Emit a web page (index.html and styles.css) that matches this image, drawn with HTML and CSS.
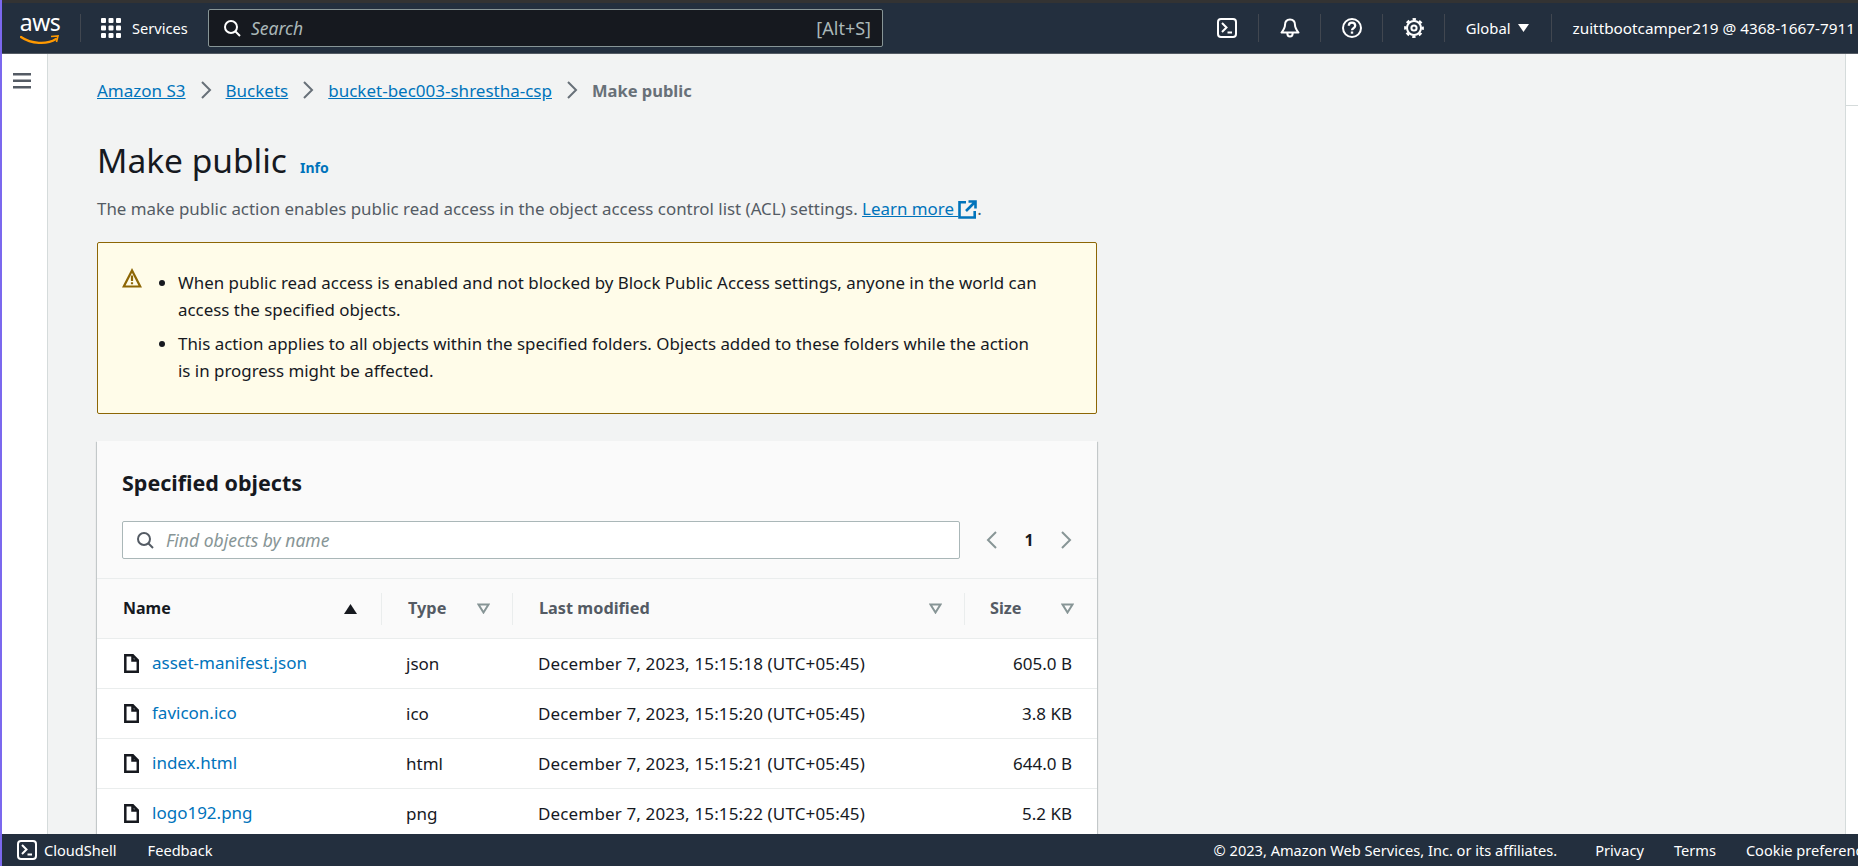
FILE: index.html
```html
<!DOCTYPE html>
<html lang="en">
<head>
    <meta charset="UTF-8">
    <title>Make public</title>
    <link rel="stylesheet" href="styles.css">
</head>
<body>
    <div class="app">
        <div class="top-strip"></div>
        <header class="topnav">
            <div class="aws-logo">
                <span class="aws-word">aws</span>
                <svg class="aws-smile" width="40" height="10" viewBox="0 0 40 10"><path d="M1 2c10 7 26 8 35 2" fill="none" stroke="#f90" stroke-width="2.2" stroke-linecap="round"/><path d="M31 1.500l7-.5-1.500 6" fill="none" stroke="#f90" stroke-width="1.600"/></svg>
            </div>
            <div class="nav-sep nav-sep-logo"></div>
            <svg class="grid-icon" width="20" height="20" viewBox="0 0 20 20" fill="#fff">
                <rect x="0" y="0" width="5" height="5" rx="1"/><rect x="7.500" y="0" width="5" height="5" rx="1"/><rect x="15" y="0" width="5" height="5" rx="1"/>
                <rect x="0" y="7.500" width="5" height="5" rx="1"/><rect x="7.500" y="7.500" width="5" height="5" rx="1"/><rect x="15" y="7.500" width="5" height="5" rx="1"/>
                <rect x="0" y="15" width="5" height="5" rx="1"/><rect x="7.500" y="15" width="5" height="5" rx="1"/><rect x="15" y="15" width="5" height="5" rx="1"/>
            </svg>
            <span class="services">Services</span>
            <div class="nav-search">
                <svg width="18" height="18" viewBox="0 0 18 18" fill="none" stroke="#fff" stroke-width="2"><circle cx="8" cy="8" r="6"/><path d="M12.500 12.500l4.500 4.500"/></svg>
                <span class="nav-search-text">Search</span>
                <span class="nav-search-key">[Alt+S]</span>
            </div>
            <div class="nav-right">
                <svg class="nav-icon nav-icon-first" width="20" height="20" viewBox="0 0 20 20" fill="none" stroke="#fff" stroke-width="2"><rect x="1" y="1" width="18" height="18" rx="3"/><path d="M5 5l4.500 4.500L5 14M10.500 14.500h4.500"/></svg>
                <div class="nav-sep"></div>
                <svg class="nav-icon" width="20" height="20" viewBox="0 0 20 20" fill="none" stroke="#fff" stroke-width="2" stroke-linejoin="round"><path d="M10 1.500c-3.500 0-5 2.500-5 5.500 0 3-1.500 5-3.500 7.500h17C16.500 12 15 10 15 7c0-3-1.500-5.500-5-5.500z"/><path d="M7.300 15c0 4.800 5.400 4.800 5.400 0"/></svg>
                <div class="nav-sep"></div>
                <svg class="nav-icon" width="20" height="20" viewBox="0 0 20 20" fill="none" stroke="#fff" stroke-width="2"><circle cx="10" cy="10" r="9"/><path d="M6.800 7.800c0-4.300 6.400-4.300 6.400 0 0 2.500-3.200 2.400-3.200 4.400" stroke-width="2.300"/><path d="M10 13.500v2.200" stroke-width="2.400"/></svg>
                <div class="nav-sep"></div>
                <svg class="nav-icon" width="20" height="20" viewBox="0 0 20 20" fill="none" stroke="#fff"><circle cx="10" cy="10" r="2.600" stroke-width="2"/><circle cx="10" cy="10" r="7" stroke-width="2"/><circle cx="10" cy="10" r="8.700" stroke-width="2.400" stroke-dasharray="3.400 3.430" stroke-dashoffset="1.700"/></svg>
                <div class="nav-sep"></div>
                <span class="nav-region">Global</span>
                <svg class="region-caret" width="11" height="8" viewBox="0 0 11 8" fill="#fff"><path d="M0 0h11L5.500 8z"/></svg>
                <div class="nav-sep"></div>
                <span class="nav-user">zuittbootcamper219 @ 4368-1667-7911</span>
            </div>
        </header>

        <div class="body-row">
            <aside class="sidenav">
                <svg width="18" height="16" viewBox="0 0 18 16" fill="#545b64"><rect width="18" height="2.500"/><rect y="6.500" width="18" height="2.500"/><rect y="13" width="18" height="2.500"/></svg>
            </aside>

            <main class="content">
                <nav class="breadcrumbs">
                    <a href="#">Amazon S3</a>
                    <svg class="crumb-sep" width="12" height="18" viewBox="0 0 12 18" fill="none" stroke="#687078" stroke-width="2"><path d="M2 1l8 8-8 8"/></svg>
                    <a href="#">Buckets</a>
                    <svg class="crumb-sep" width="12" height="18" viewBox="0 0 12 18" fill="none" stroke="#687078" stroke-width="2"><path d="M2 1l8 8-8 8"/></svg>
                    <a href="#">bucket-bec003-shrestha-csp</a>
                    <svg class="crumb-sep" width="12" height="18" viewBox="0 0 12 18" fill="none" stroke="#687078" stroke-width="2"><path d="M2 1l8 8-8 8"/></svg>
                    <span class="crumb-current">Make public</span>
                </nav>

                <div class="page-title">
                    <h1>Make public</h1>
                    <a class="info-link" href="#">Info</a>
                </div>
                <p class="page-desc">The make public action enables public read access in the object access control list (ACL) settings. <a href="#">Learn more </a><svg class="ext-icon" width="19" height="19" viewBox="0 0 19 19" fill="none" stroke="#0073bb" stroke-width="2.600"><path d="M8 2.300H1.500v15.200h15.200V11M10.500 1.500h7v7M17 2L8 11"/></svg>.</p>

                <div class="alert">
                    <svg class="alert-icon" width="20" height="20" viewBox="0 0 20 20" fill="none" stroke="#8d6605" stroke-width="2.200"><path d="M10 2.500L1.800 18.500h16.400z"/><path d="M10 7.500v5.500M10 14.300v2"/></svg>
                    <ul>
                        <li>When public read access is enabled and not blocked by Block Public Access settings, anyone in the world can access the specified objects.</li>
                        <li>This action applies to all objects within the specified folders. Objects added to these folders while the action is in progress might be affected.</li>
                    </ul>
                </div>

                <section class="card">
                    <h2>Specified objects</h2>
                    <div class="filter-row">
                        <div class="filter-input">
                            <svg width="18" height="18" viewBox="0 0 18 18" fill="none" stroke="#545b64" stroke-width="2"><circle cx="8" cy="8" r="6"/><path d="M12.500 12.500l4.500 4.500"/></svg>
                            <span>Find objects by name</span>
                        </div>
                        <div class="pager">
                            <svg width="12" height="18" viewBox="0 0 12 18" fill="none" stroke="#879596" stroke-width="2"><path d="M10 1L2 9l8 8"/></svg>
                            <span class="pager-num">1</span>
                            <svg width="12" height="18" viewBox="0 0 12 18" fill="none" stroke="#879596" stroke-width="2"><path d="M2 1l8 8-8 8"/></svg>
                        </div>
                    </div>

                    <div class="table">
                        <div class="thead">
                            <div class="th th-active"><span>Name</span><svg width="13" height="10" viewBox="0 0 13 10" fill="#16191f"><path d="M6.500 0L13 10H0z"/></svg></div>
                            <div class="th"><span>Type</span><svg width="13" height="11" viewBox="0 0 13 11" fill="none" stroke="#879596" stroke-width="2"><path d="M1.500 1.500h10l-5 8z"/></svg></div>
                            <div class="th"><span>Last modified</span><svg width="13" height="11" viewBox="0 0 13 11" fill="none" stroke="#879596" stroke-width="2"><path d="M1.500 1.500h10l-5 8z"/></svg></div>
                            <div class="th th-size"><span>Size</span><svg width="13" height="11" viewBox="0 0 13 11" fill="none" stroke="#879596" stroke-width="2"><path d="M1.500 1.500h10l-5 8z"/></svg></div>
                        </div>
                        <div class="tr">
                            <div class="td td-name"><svg width="15" height="19" viewBox="0 0 15 19" fill="none" stroke="#16191f" stroke-width="2.500"><path d="M1.300 1.300h7.500l5 5v11.400H1.300zM8.500 1.300v5.200h5.300"/></svg><a href="#">asset-manifest.json</a></div>
                            <div class="td">json</div>
                            <div class="td td-date">December 7, 2023, 15:15:18 (UTC+05:45)</div>
                            <div class="td td-size">605.0 B</div>
                        </div>
                        <div class="tr">
                            <div class="td td-name"><svg width="15" height="19" viewBox="0 0 15 19" fill="none" stroke="#16191f" stroke-width="2.500"><path d="M1.300 1.300h7.500l5 5v11.400H1.300zM8.500 1.300v5.200h5.300"/></svg><a href="#">favicon.ico</a></div>
                            <div class="td">ico</div>
                            <div class="td td-date">December 7, 2023, 15:15:20 (UTC+05:45)</div>
                            <div class="td td-size">3.8 KB</div>
                        </div>
                        <div class="tr">
                            <div class="td td-name"><svg width="15" height="19" viewBox="0 0 15 19" fill="none" stroke="#16191f" stroke-width="2.500"><path d="M1.300 1.300h7.500l5 5v11.400H1.300zM8.500 1.300v5.200h5.300"/></svg><a href="#">index.html</a></div>
                            <div class="td">html</div>
                            <div class="td td-date">December 7, 2023, 15:15:21 (UTC+05:45)</div>
                            <div class="td td-size">644.0 B</div>
                        </div>
                        <div class="tr">
                            <div class="td td-name"><svg width="15" height="19" viewBox="0 0 15 19" fill="none" stroke="#16191f" stroke-width="2.500"><path d="M1.300 1.300h7.500l5 5v11.400H1.300zM8.500 1.300v5.200h5.300"/></svg><a href="#">logo192.png</a></div>
                            <div class="td">png</div>
                            <div class="td td-date">December 7, 2023, 15:15:22 (UTC+05:45)</div>
                            <div class="td td-size">5.2 KB</div>
                        </div>
                    </div>
                </section>
            </main>

            <aside class="tools-rail"><div class="tools-rail-top"></div></aside>
        </div>

        <footer class="footer">
            <svg class="foot-icon" width="20" height="20" viewBox="0 0 20 20" fill="none" stroke="#fff" stroke-width="2"><rect x="1" y="1" width="18" height="18" rx="3"/><path d="M5 5l4.500 4.500L5 14M10.500 14.500h4.500"/></svg>
            <span class="foot-shell">CloudShell</span>
            <span class="foot-feedback">Feedback</span>
            <div class="foot-right">
                <span>© 2023, Amazon Web Services, Inc. or its affiliates.</span>
                <span class="foot-link foot-link-first">Privacy</span>
                <span class="foot-link">Terms</span>
                <span class="foot-link">Cookie preferences</span>
            </div>
        </footer>
    </div>
</body>
</html>
```

FILE: styles.css
```css
* {
    box-sizing: border-box;
}
html, body {
    margin: 0;
    padding: 0;
    height: 100%;
    overflow: hidden;
}
body {
    font-family: "Noto Sans", Arial, sans-serif;
    font-size: 17px;
    color: #16191f;
    background-color: #7b68ee;
}
a {
    color: #0073bb;
}
.app {
    margin-left: 2px;
    height: 100vh;
    display: flex;
    flex-direction: column;
    overflow: hidden;
}

/* top nav */
.top-strip {
    height: 3px;
    background-color: #333;
    flex: none;
}
.topnav {
    height: 51px;
    flex: none;
    display: flex;
    align-items: center;
    background-color: #232f3e;
    border-bottom: 1px solid #545b64;
    color: #fff;
    padding-left: 18px;
    font-size: 14.6px;
    white-space: nowrap;
}
.aws-logo {
    width: 40px;
    height: 34px;
    display: flex;
    flex-direction: column;
    align-items: center;
}
.aws-word {
    font-size: 23px;
    line-height: 23px;
    height: 23px;
    letter-spacing: -0.5px;
}
.aws-smile {
    display: block;
    margin-top: 1px;
}
.nav-sep {
    width: 1px;
    height: 28px;
    background-color: #414750;
    flex: none;
}
.nav-sep-logo {
    margin-left: 20px;
}
.grid-icon {
    margin-left: 20px;
}
.services {
    margin-left: 11px;
    width: 76px;
}
.nav-search {
    width: 675px;
    height: 38px;
    display: flex;
    align-items: center;
    background-color: #16191f;
    border: 1px solid #879596;
    border-radius: 2px;
    padding: 0 11px 0 14px;
    font-size: 17.5px;
    color: #aab7b8;
}
.nav-search-text {
    margin-left: 10px;
    font-style: italic;
    flex: 1;
}
.nav-search-key {
    font-size: 18px;
}
.nav-right {
    margin-left: auto;
    display: flex;
    align-items: center;
    padding-right: 3px;
}
.nav-icon {
    margin: 0 20px 0 21px;
}
.nav-icon-first {
    margin-right: 21px;
}
.nav-region {
    margin-left: 21px;
    font-size: 14.8px;
}
.region-caret {
    margin: 0 22px 0 7px;
}
.nav-user {
    margin-left: 21px;
    font-size: 15.3px;
}

/* page body */
.body-row {
    flex: 1;
    min-height: 0;
    display: flex;
}
.sidenav {
    width: 46px;
    flex: none;
    background-color: #fff;
    border-right: 1px solid #d5dbdb;
    padding: 17px 0 0 11px;
}
.content {
    flex: 1;
    min-width: 0;
    background-color: #f2f3f3;
    padding: 21px 0 0 49px;
    overflow: hidden;
}
.tools-rail {
    width: 13px;
    flex: none;
    background-color: #fff;
    border-left: 1px solid #d5dbdb;
}
.tools-rail-top {
    height: 52px;
    border-bottom: 1px solid #d5dbdb;
}

.breadcrumbs {
    height: 30px;
    display: flex;
    align-items: center;
    gap: 14px;
}
.crumb-current {
    color: #687078;
    font-weight: 700;
    font-size: 16.5px;
}
.page-title {
    display: flex;
    align-items: baseline;
    margin-top: 34px;
    height: 42px;
}
h1 {
    margin: 0;
    font-size: 33.5px;
    line-height: 42px;
    font-weight: 400;
}
.info-link {
    margin-left: 13px;
    font-size: 14px;
    font-weight: 700;
    text-decoration: none;
}
.page-desc {
    margin: 16px 0 0;
    line-height: 24px;
    color: #545b64;
    font-size: 16.9px;
}
.ext-icon {
    vertical-align: -4px;
}

.alert {
    width: 1000px;
    height: 172px;
    margin-top: 21px;
    display: flex;
    align-items: flex-start;
    background-color: #fffce9;
    border: 1px solid #8d6605;
    border-radius: 2px;
    padding: 25px 56px 0 24px;
    font-size: 16.9px;
}
.alert-icon {
    flex: none;
}
.alert ul {
    margin: 1px 0 0;
    padding-left: 36px;
}
.alert li {
    line-height: 27px;
    margin-bottom: 7px;
}

.card {
    width: 1000px;
    height: 500px;
    margin-top: 27px;
    background-color: #fafafa;
    box-shadow: 0 1px 1px 0 rgba(0,28,36,0.3), 1px 1px 1px 0 rgba(0,28,36,0.15), -1px 1px 1px 0 rgba(0,28,36,0.15);
}
h2 {
    margin: 0;
    padding: 28px 0 0 25px;
    font-size: 21.5px;
    line-height: 27px;
    font-weight: 700;
}
.filter-row {
    display: flex;
    align-items: center;
    margin-top: 25px;
    padding-left: 25px;
}
.filter-input {
    width: 838px;
    height: 38px;
    display: flex;
    align-items: center;
    gap: 12px;
    padding-left: 13px;
    background-color: #fff;
    border: 1px solid #aab7b8;
    border-radius: 2px;
    color: #879596;
    font-style: italic;
    font-size: 17.5px;
}
.pager {
    display: flex;
    align-items: center;
    margin-left: 26px;
}
.pager-num {
    width: 62px;
    text-align: center;
    font-weight: 700;
    font-size: 16px;
}

.table {
    margin-top: 19px;
    border-top: 1px solid #eaeded;
}
.thead, .tr {
    display: grid;
    grid-template-columns: 284px 131px 452px 133px;
}
.thead {
    height: 60px;
    align-items: center;
    border-bottom: 1px solid #eaeded;
}
.th {
    height: 32px;
    display: flex;
    align-items: center;
    justify-content: space-between;
    padding: 0 22px 0 26px;
    border-left: 1px solid #eaeded;
    font-weight: 700;
    font-size: 16.3px;
    color: #545b64;
}
.th span {
    margin-top: -2px;
}
.th-size {
    padding: 0 23px 0 25px;
}
.th-active {
    border-left: none;
    color: #16191f;
    padding: 0 24px 0 26px;
    font-size: 16px;
}
.tr {
    height: 50px;
    background-color: #fff;
    border-bottom: 1px solid #eaeded;
}
.td {
    display: flex;
    align-items: center;
    padding-left: 25px;
}
.td-name {
    padding-left: 27px;
}
.td-name a {
    margin-left: 13px;
    text-decoration: none;
    margin-top: -3px;
}
.td-date {
    padding-left: 26px;
    letter-spacing: 0.15px;
}
.td-size {
    justify-content: flex-end;
    padding: 0 25px 0 0;
}

.footer {
    height: 32px;
    flex: none;
    display: flex;
    align-items: center;
    background-color: #232f3e;
    color: #fff;
    font-size: 14.6px;
    padding-left: 15px;
    white-space: nowrap;
    overflow: hidden;
}
.foot-icon {
    flex: none;
}
.foot-shell {
    margin-left: 7px;
    flex: none;
}
.foot-feedback {
    margin-left: 31px;
    flex: none;
}
.foot-right {
    margin-left: 1001px;
    display: flex;
    flex: none;
}
.foot-link {
    margin-left: 30px;
}
.foot-link-first {
    margin-left: 38px;
}
```
